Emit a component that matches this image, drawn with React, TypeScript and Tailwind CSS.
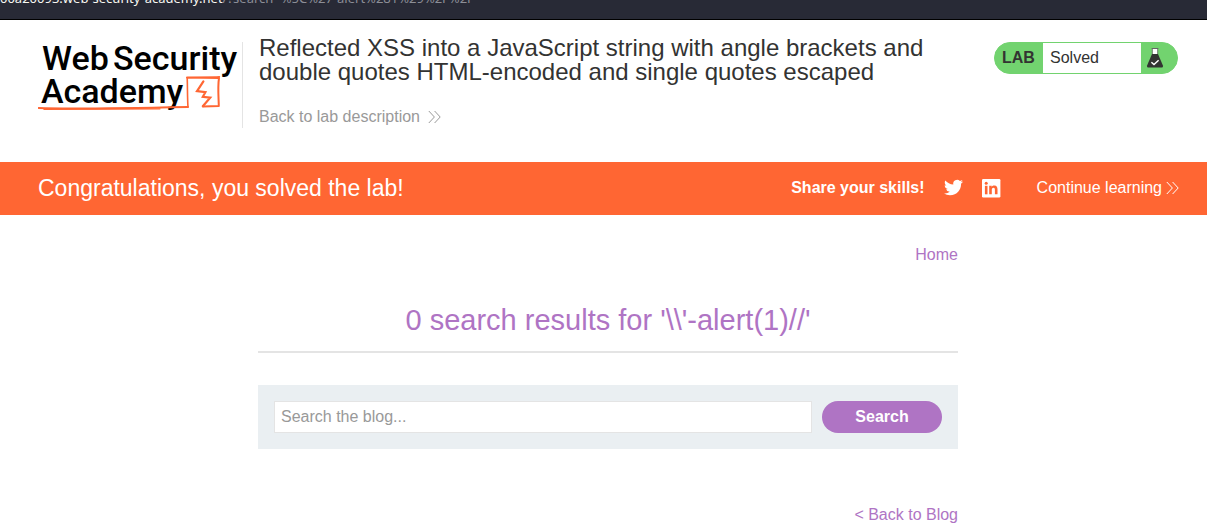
import React from "react";

function DoubleChevron({ className }: { className?: string }) {
  return (
    <svg viewBox="0 0 13 14" className={className} fill="none" stroke="currentColor" strokeWidth="1" aria-hidden="true">
      <path d="M0.8 1 L6.4 7 L0.8 13 M6.6 1 L12.2 7 L6.6 13" />
    </svg>
  );
}

function Logo() {
  return (
    <svg viewBox="0 0 204 78" className="block h-[78px] w-[204px]" role="img" aria-label="Web Security Academy">
      <g fill="#000" fontFamily="Roboto, 'Liberation Sans', sans-serif" fontSize="34" fontWeight="500">
        <text x="4" y="28">Web</text>
        <text x="75" y="28">Security</text>
        <text x="3" y="61">Academy</text>
      </g>
      <g fill="none" stroke="#ff6633" strokeLinecap="round" strokeLinejoin="round">
        <path strokeWidth="1.8" d="M0.5 66 C20 66.8 70 66.6 150 65" />
        <path strokeWidth="1.2" d="M6 67.4 L122 66.8" />
        <path strokeWidth="1.6" d="M150 65 C149.3 56 149.6 45 149.2 35.8 C160 35 171 35.6 181.4 34.9" />
        <path strokeWidth="2" d="M149 35.4 L181 36 C179.6 45 180.6 55 180.8 64 L165 64.4" />
        <path strokeWidth="2.2" strokeLinejoin="miter" d="M165.4 39.4 L159 49.2 L167.4 50.2 L164.8 54.8 L172.2 55.6 L164.8 64.2" />
      </g>
    </svg>
  );
}

function Flask() {
  return (
    <svg viewBox="0 0 18 22" className="h-[22px] w-[18px]" aria-hidden="true">
      <path d="M6.5 2 H11.5 V9 H6.5 Z" fill="#fff" />
      <path d="M5.6 1.5 H12.4" stroke="#666" strokeWidth="1" />
      <path d="M6.3 2 V7 M11.7 2 V7" stroke="#666" strokeWidth="0.8" />
      <path d="M6 7 H12 L16.8 18.2 Q17.6 20.6 15.2 20.6 H2.8 Q0.4 20.6 1.2 18.2 Z" fill="#333332" />
      <path d="M5.4 15.2 L8 17.6 L12.6 13.2" fill="none" stroke="#fff" strokeWidth="1.4" />
    </svg>
  );
}

function TwitterIcon() {
  return (
    <svg viewBox="0 0 24 24" className="h-[19px] w-[19px]" fill="currentColor" aria-hidden="true">
      <path d="M23.95 4.57a10 10 0 0 1-2.82.77 4.96 4.96 0 0 0 2.16-2.72c-.95.55-2 .95-3.13 1.18a4.92 4.92 0 0 0-8.38 4.48C7.69 8.1 4.07 6.13 1.64 3.16a4.82 4.82 0 0 0-.67 2.48c0 1.71.87 3.21 2.19 4.1a4.9 4.9 0 0 1-2.23-.62v.06a4.92 4.92 0 0 0 3.95 4.83 5 5 0 0 1-2.21.09 4.94 4.94 0 0 0 4.6 3.42A9.87 9.87 0 0 1 0 19.54a13.99 13.99 0 0 0 7.55 2.21c9.05 0 14-7.5 14-13.98 0-.21 0-.42-.02-.63a9.94 9.94 0 0 0 2.46-2.55z" />
    </svg>
  );
}

function LinkedInIcon() {
  return (
    <svg viewBox="0 0 20 20" className="h-5 w-5" aria-hidden="true">
      <rect x="1" y="1" width="18.4" height="18.4" rx="1.2" fill="#fff" />
      <g fill="#ff6633">
        <circle cx="5.2" cy="5.2" r="1.5" />
        <path d="M3.9 7.8 H6.5 V16.3 H3.9 Z" />
        <path d="M8.2 7.8 H10.7 V9 C11.2 8.1 12.2 7.6 13.3 7.6 C15.9 7.6 16.5 9.3 16.5 11.6 V16.3 H13.9 V12.1 C13.9 11 13.8 9.8 12.5 9.8 C11.1 9.8 10.8 10.9 10.8 12 V16.3 H8.2 Z" />
      </g>
    </svg>
  );
}

export default function App() {
  return (
    <div className="bg-white font-['Liberation_Sans',Arial,sans-serif] text-base text-[#333332]">
      <div className="flex h-5 items-start overflow-hidden border-b border-black bg-[#282a36] text-[13px] leading-4 whitespace-nowrap">
        <p className="-mt-2.5 font-['Noto_Sans',sans-serif] text-[#8c8e96]">
          <span className="text-[#f8f8f2]">00a20093.web-security-academy.net</span>/?search=%5C%27-alert%281%29%2F%2F
        </p>
      </div>

      <header className="flex items-start pt-[22px] pr-[29px] pb-[33px] pl-[38px]">
        <a href="#academy" className="h-[86px] shrink-0 border-r border-[#e4e4e4]">
          <Logo />
        </a>
        <div className="flex-1 pl-4">
          <h2 className="-mt-1.5 max-w-[700px] text-2xl leading-6">
            Reflected XSS into a JavaScript string with angle brackets and double quotes HTML-encoded and single quotes escaped
          </h2>
          <a href="#description" className="mt-[21px] flex items-center gap-2 text-[#999]">
            Back to lab description
            <DoubleChevron className="h-3.5 w-[13px]" />
          </a>
        </div>
        <div className="flex h-8 w-[184px] shrink-0 items-stretch overflow-hidden rounded-full border border-[#72d36f] bg-[#72d36f]">
          <span className="flex w-12 items-center pl-[7px] font-bold">LAB</span>
          <span className="flex flex-1 items-center bg-white pl-[7px]">Solved</span>
          <span className="flex w-9 items-center pl-[5px]">
            <Flask />
          </span>
        </div>
      </header>

      <section className="flex h-[53px] items-center bg-[#ff6633] pr-7 pb-0.5 pl-[38px] text-white">
        <h4 className="flex-1 pt-0.5 text-[23px]">Congratulations, you solved the lab!</h4>
        <span className="font-bold">Share your skills!</span>
        <a href="#twitter" aria-label="Share on Twitter" className="ml-[19px]">
          <TwitterIcon />
        </a>
        <a href="#linkedin" aria-label="Share on LinkedIn" className="ml-[18px]">
          <LinkedInIcon />
        </a>
        <a href="#continue" className="ml-9 flex items-center gap-1">
          Continue learning
          <DoubleChevron className="h-3.5 w-[13px]" />
        </a>
      </section>

      <div className="pr-[29px] pl-[38px]">
        <main className="mx-auto max-w-[700px] pt-7">
          <nav className="flex justify-end text-[#af74c4]">
            <a href="#home">Home</a>
          </nav>
          <h1 className="mt-[33px] border-b-2 border-[#e4e4e4] pb-[11px] text-center text-[29px] leading-10 text-[#af74c4]">
            0 search results for '\\'-alert(1)//'
          </h1>
          <form className="mt-8 flex gap-2.5 bg-[#eaeff2] p-4" onSubmit={(e) => e.preventDefault()}>
            <input
              type="text"
              aria-label="Search the blog"
              placeholder="Search the blog..."
              className="h-8 min-w-0 flex-1 border border-[#e4e4e4] bg-white px-1.5 placeholder:text-[#999]"
            />
            <button type="submit" className="h-8 w-[120px] rounded-full bg-[#af74c4] font-bold text-white">
              Search
            </button>
          </form>
          <div className="mt-[54px] flex justify-end text-[#af74c4]">
            <a href="#blog">&lt; Back to Blog</a>
          </div>
        </main>
      </div>
    </div>
  );
}
